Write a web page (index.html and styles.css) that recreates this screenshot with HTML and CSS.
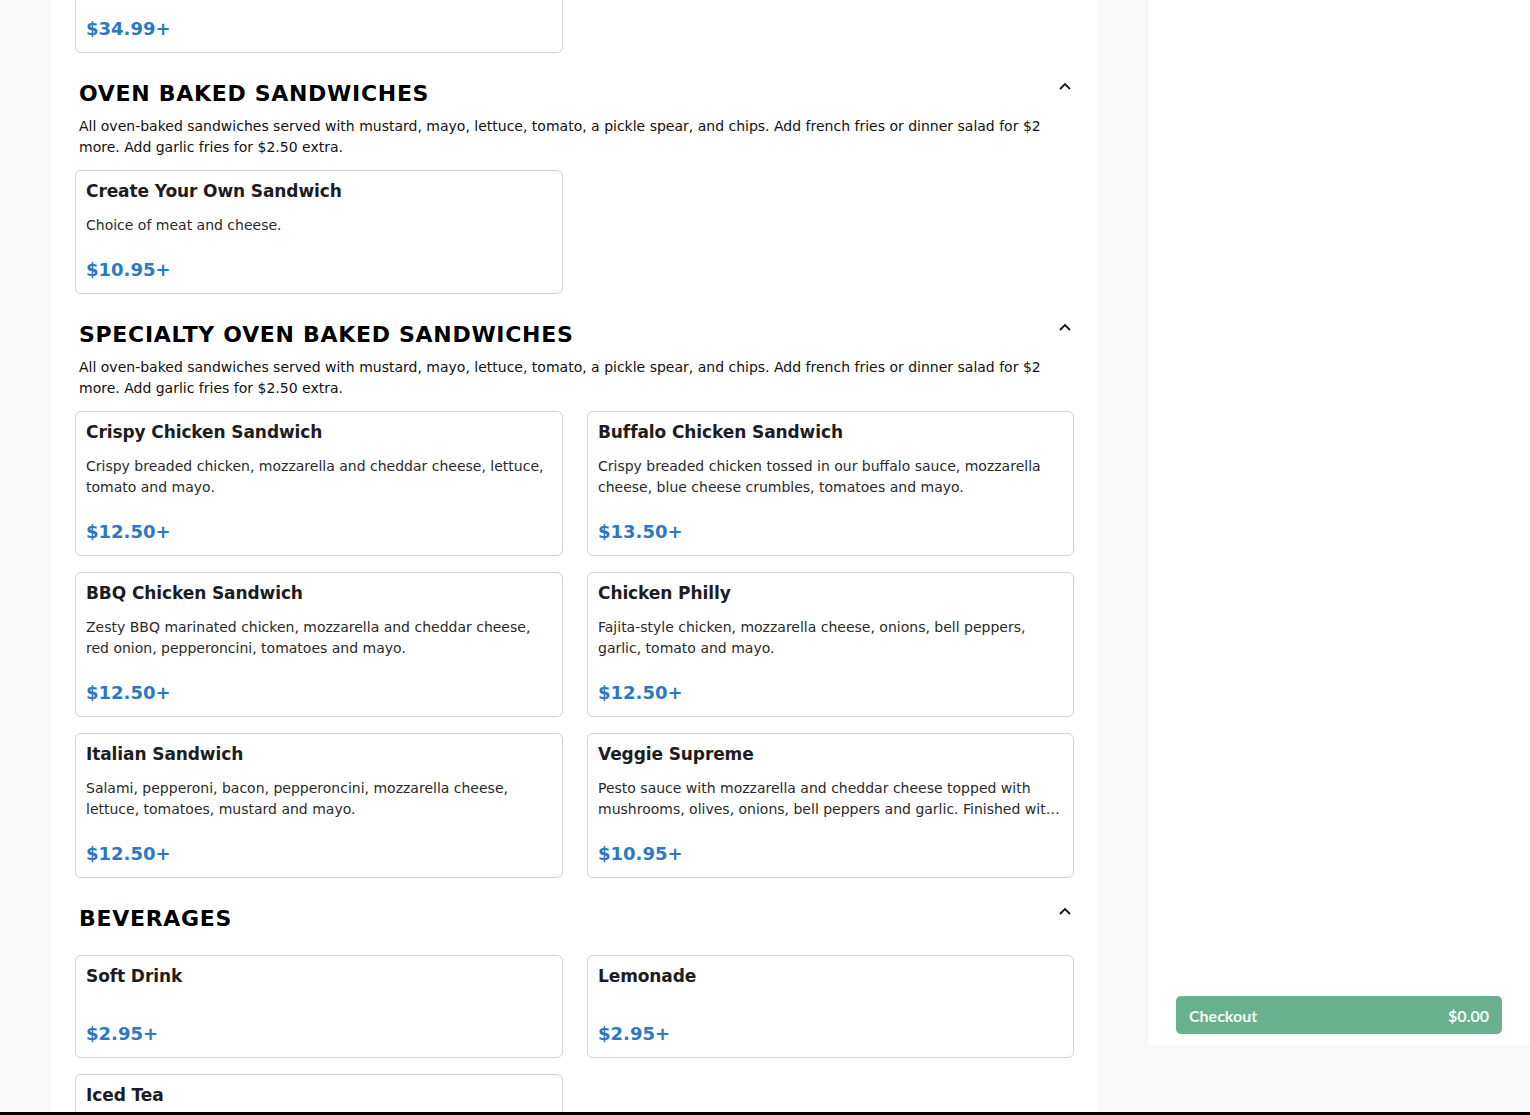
FILE: index.html
```html
<!DOCTYPE html>
<html lang="en">
<head>
<meta charset="utf-8">
<title>Menu</title>
<link rel="stylesheet" href="styles.css">
</head>
<body>
<div class="page">
  <main class="menu">
    <div class="menu-inner">
      <section class="category first">
        <div class="grid">
          <div class="card">
            <div class="card-title">&nbsp;</div>
            <div class="card-desc"></div>
            <div class="card-price">$34.99+</div>
          </div>
        </div>
      </section>

      <section class="category">
        <div class="cat-head">
          <h2 class="cat-title">OVEN BAKED SANDWICHES</h2>
          <svg class="chevron" viewBox="0 0 12 7" width="12" height="7"><path d="M1 6 L6 1 L11 6" fill="none" stroke="#111" stroke-width="1.8"/></svg>
        </div>
        <p class="cat-desc">All oven-baked sandwiches served with mustard, mayo, lettuce, tomato, a pickle spear, and chips. Add french fries or dinner salad for $2 more. Add garlic fries for $2.50 extra.</p>
        <div class="grid">
          <div class="card">
            <div class="card-title">Create Your Own Sandwich</div>
            <div class="card-desc">Choice of meat and cheese.</div>
            <div class="card-price">$10.95+</div>
          </div>
        </div>
      </section>

      <section class="category">
        <div class="cat-head">
          <h2 class="cat-title">SPECIALTY OVEN BAKED SANDWICHES</h2>
          <svg class="chevron" viewBox="0 0 12 7" width="12" height="7"><path d="M1 6 L6 1 L11 6" fill="none" stroke="#111" stroke-width="1.8"/></svg>
        </div>
        <p class="cat-desc">All oven-baked sandwiches served with mustard, mayo, lettuce, tomato, a pickle spear, and chips. Add french fries or dinner salad for $2 more. Add garlic fries for $2.50 extra.</p>
        <div class="grid">
          <div class="card">
            <div class="card-title">Crispy Chicken Sandwich</div>
            <div class="card-desc">Crispy breaded chicken, mozzarella and cheddar cheese, lettuce, tomato and mayo.</div>
            <div class="card-price">$12.50+</div>
          </div>
          <div class="card">
            <div class="card-title">Buffalo Chicken Sandwich</div>
            <div class="card-desc">Crispy breaded chicken tossed in our buffalo sauce, mozzarella cheese, blue cheese crumbles, tomatoes and mayo.</div>
            <div class="card-price">$13.50+</div>
          </div>
          <div class="card">
            <div class="card-title">BBQ Chicken Sandwich</div>
            <div class="card-desc">Zesty BBQ marinated chicken, mozzarella and cheddar cheese, red onion, pepperoncini, tomatoes and mayo.</div>
            <div class="card-price">$12.50+</div>
          </div>
          <div class="card">
            <div class="card-title">Chicken Philly</div>
            <div class="card-desc">Fajita-style chicken, mozzarella cheese, onions, bell peppers, garlic, tomato and mayo.</div>
            <div class="card-price">$12.50+</div>
          </div>
          <div class="card">
            <div class="card-title">Italian Sandwich</div>
            <div class="card-desc">Salami, pepperoni, bacon, pepperoncini, mozzarella cheese, lettuce, tomatoes, mustard and mayo.</div>
            <div class="card-price">$12.50+</div>
          </div>
          <div class="card">
            <div class="card-title">Veggie Supreme</div>
            <div class="card-desc">Pesto sauce with mozzarella and cheddar cheese topped with mushrooms, olives, onions, bell peppers and garlic. Finished with a drizzle of balsamic glaze.</div>
            <div class="card-price">$10.95+</div>
          </div>
        </div>
      </section>

      <section class="category">
        <div class="cat-head">
          <h2 class="cat-title">BEVERAGES</h2>
          <svg class="chevron" viewBox="0 0 12 7" width="12" height="7"><path d="M1 6 L6 1 L11 6" fill="none" stroke="#111" stroke-width="1.8"/></svg>
        </div>
        <p class="cat-desc empty"></p>
        <div class="grid">
          <div class="card">
            <div class="card-title">Soft Drink</div>
            <div class="card-desc"></div>
            <div class="card-price">$2.95+</div>
          </div>
          <div class="card">
            <div class="card-title">Lemonade</div>
            <div class="card-desc"></div>
            <div class="card-price">$2.95+</div>
          </div>
          <div class="card">
            <div class="card-title">Iced Tea</div>
            <div class="card-desc"></div>
            <div class="card-price">$2.95+</div>
          </div>
        </div>
      </section>
    </div>
  </main>

  <aside class="cart">
    <div class="cart-body"></div>
    <button class="checkout" type="button">
      <span>Checkout</span>
      <span>$0.00</span>
    </button>
  </aside>
</div>
<div class="screen-edge"></div>
</body>
</html>
```

FILE: styles.css
```css
html, body {
  margin: 0;
  padding: 0;
  height: 100%;
  overflow: hidden;
}

body {
  background: #f9f9f9;
  font-family: "DejaVu Sans", "Liberation Sans", sans-serif;
  color: #1c1c1c;
}

.page {
  display: flex;
  align-items: flex-start;
  padding-left: 51px;
  gap: 49px;
  height: 1115px;
}

.menu {
  width: 1047px;
  flex: none;
  background: #ffffff;
  height: 1115px;
  overflow: hidden;
}

.menu-inner {
  padding: 0 24px;
  margin-top: -50px;
}

.category {
  display: flex;
  flex-direction: column;
  padding-top: 27px;
}

.category.first {
  padding-top: 0;
}

.cat-head {
  display: flex;
  justify-content: space-between;
  align-items: flex-start;
  padding: 0 1px 0 4px;
}

.cat-title {
  margin: 0;
  font-size: 22px;
  line-height: 28px;
  font-weight: bold;
  color: #000;
  letter-spacing: 0.7px;
}

.chevron {
  margin-top: 3px;
  margin-right: 2px;
  display: block;
}

.cat-desc {
  margin: 8px 0 12px;
  padding: 0 4px;
  font-size: 14px;
  line-height: 21px;
  color: #111;
}

.cat-desc.empty {
  margin: 0;
  height: 22px;
}

.grid {
  display: grid;
  grid-template-columns: 488px 487px;
  column-gap: 24px;
  row-gap: 16px;
}

.card {
  display: flex;
  flex-direction: column;
  border: 1px solid #d3d3d3;
  border-radius: 6px;
  padding: 10px 10px 12px;
  background: #fff;
}

.card-title {
  font-size: 17px;
  line-height: 20px;
  font-weight: bold;
  color: #1c1c22;
  letter-spacing: -0.1px;
}

.card-desc {
  margin: 14px 0 23px;
  font-size: 14px;
  line-height: 21px;
  color: #2a2a2a;
  display: -webkit-box;
  -webkit-line-clamp: 2;
  -webkit-box-orient: vertical;
  overflow: hidden;
  flex: 1 1 auto;
}

.card-price {
  font-size: 18px;
  line-height: 22px;
  font-weight: bold;
  color: #2b79c2;
}

.cart {
  width: 383px;
  flex: none;
  height: 1045px;
  background: #ffffff;
  box-sizing: border-box;
  border-left: 1px solid #f3f3f3;
  display: flex;
  flex-direction: column;
  padding: 0 28px 11px 28px;
}

.cart-body {
  flex: 1 1 auto;
}

.checkout {
  display: flex;
  justify-content: space-between;
  align-items: center;
  height: 38px;
  width: 100%;
  border: none;
  border-radius: 5px;
  background: #69b08e;
  color: #f4fbf7;
  padding: 0 13px;
  font-family: "Lato", "Open Sans", sans-serif;
  font-weight: bold;
  font-size: 16px;
}

.screen-edge {
  position: fixed;
  left: 0;
  right: 0;
  bottom: 0;
  height: 3px;
  background: #000;
}
```
